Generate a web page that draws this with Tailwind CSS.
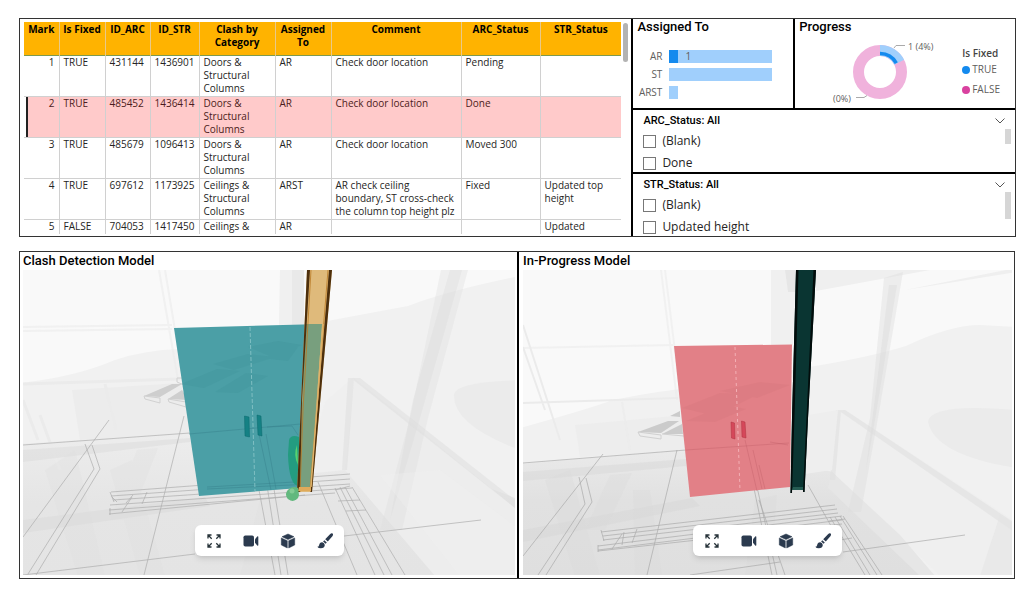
<!DOCTYPE html>
<html lang="en">
<head>
  <meta charset="UTF-8" />
  <meta name="viewport" content="width=device-width, initial-scale=1.0" />
  <title>Clash Detection Report</title>
  <script src="https://cdn.jsdelivr.net/npm/@tailwindcss/browser@4"></script>
</head>
<body class="bg-white text-[#252423] font-['Open_Sans',sans-serif] pt-[18px] pl-[19px] pr-[19px]">

  <!-- Shared icons -->
  <svg class="hidden">
    <symbol id="expand" viewBox="0 0 16 16">
      <path d="M2 5.500V2h3.500M10.500 2H14v3.500M14 10.500V14h-3.500M5.500 14H2v-3.500M2.300 2.300 5.700 5.700M13.700 2.300 10.300 5.700M13.700 13.700 10.300 10.300M2.300 13.700 5.700 10.300" fill="none" stroke="#263238" stroke-width="1.300" />
    </symbol>
    <symbol id="video" viewBox="0 0 16 16">
      <rect x="0.500" y="2.500" width="10.500" height="11" rx="1.800" fill="#2b3a4e" />
      <path d="M12 6.200 14.200 3.500q1.100-.8 1.100.500v8q0 1.300-1.100.5L12 9.800z" fill="#2b3a4e" />
    </symbol>
    <symbol id="cube" viewBox="0 0 16 16">
      <path d="M8 1 14 3.700 8 6.500 2 3.700zM1.300 4.900 7.300 7.700V15L1.300 12zM14.700 4.900 8.700 7.700V15l6-3z" fill="#2b3a4e" stroke="#2b3a4e" stroke-width=".5" stroke-linejoin="round" />
    </symbol>
    <symbol id="brush" viewBox="0 0 16 16">
      <path d="M15.600.6q1 1-.2 2.600L10.800 8.600 8.200 6.300 13 1.200Q14.600-.3 15.600.6zM7.300 7.200 9.800 9.600 8.600 10.800 6.100 8.400zM5.300 9.300q2.300.5 2.500 2.700-.3 3.300-4 3.300-2.500 0-3.500-1.500 1.500 0 1.800-1.600.5-3 3.200-2.900z" fill="#2b3a4e" />
    </symbol>
  </svg>

  <main>
    <section class="grid grid-cols-[612fr_384fr] border border-[#333]">
      <!-- Clash table -->
      <div class="relative h-[217px] pt-[3px] pl-[4px] pr-[10px]">
        <div class="h-[212px] overflow-hidden">
          <table class="w-full table-fixed border-collapse text-[10px] leading-[13px]">
            <colgroup>
              <col class="w-[35px]" /><col class="w-[46px]" /><col class="w-[45px]" /><col class="w-[49px]" /><col class="w-[76px]" /><col class="w-[56px]" /><col class="w-[130px]" /><col class="w-[79px]" /><col />
            </colgroup>
            <thead class="bg-[#ffb300] text-black">
              <tr class="h-[33px] align-top border-b border-[#7d9a50]">
                <th class="pt-px border-r border-[#e8c98a]">Mark</th>
                <th class="pt-px border-r border-[#e8c98a]">Is Fixed</th>
                <th class="pt-px border-r border-[#e8c98a]">ID_ARC</th>
                <th class="pt-px border-r border-[#e8c98a]">ID_STR</th>
                <th class="pt-px border-r border-[#e8c98a]">Clash by<br />Category</th>
                <th class="pt-px border-r border-[#e8c98a]">Assigned<br />To</th>
                <th class="pt-px border-r border-[#e8c98a]">Comment</th>
                <th class="pt-px border-r border-[#e8c98a]">ARC_Status</th>
                <th class="pt-px">STR_Status</th>
              </tr>
            </thead>
            <tbody class="[&_td]:pl-[4px] [&_td]:border-r [&_td]:border-[#d0d0d0] [&_td:last-child]:border-r-0 [&_td:first-child]:text-right [&_td:first-child]:pr-[4px] [&_tr]:h-[41px] [&_tr]:align-top [&_tr]:border-b [&_tr]:border-[#d0d0d0]">
              <tr><td>1</td><td>TRUE</td><td>431144</td><td>1436901</td><td>Doors &amp;<br />Structural<br />Columns</td><td>AR</td><td>Check door location</td><td>Pending</td><td></td></tr>
              <tr class="bg-[#ffcaca] text-[#4c1c20]"><td class="shadow-[inset_2px_0_0_#fff,inset_4px_0_0_#222]">2</td><td>TRUE</td><td>485452</td><td>1436414</td><td>Doors &amp;<br />Structural<br />Columns</td><td>AR</td><td>Check door location</td><td>Done</td><td></td></tr>
              <tr><td>3</td><td>TRUE</td><td>485679</td><td>1096413</td><td>Doors &amp;<br />Structural<br />Columns</td><td>AR</td><td>Check door location</td><td>Moved 300</td><td></td></tr>
              <tr><td>4</td><td>TRUE</td><td>697612</td><td>1173925</td><td>Ceilings &amp;<br />Structural<br />Columns</td><td>ARST</td><td>AR check ceiling<br />boundary, ST cross-check<br />the column top height plz</td><td>Fixed</td><td>Updated top<br />height</td></tr>
              <tr><td>5</td><td>FALSE</td><td>704053</td><td>1417450</td><td>Ceilings &amp;</td><td>AR</td><td></td><td></td><td>Updated</td></tr>
            </tbody>
          </table>
        </div>
        <div class="absolute top-[4px] right-[3px] w-[5px] h-[39px] rounded bg-[#b3b3b3]"></div>
      </div>

      <div class="flex flex-col border-l-2 border-black">
        <div class="grid grid-cols-[162fr_220fr] h-[91px] border-b-2 border-black">
          <div class="border-r-2 border-black">
            <h2 class="pl-[4px] font-['Roboto',sans-serif] font-medium text-[13px] leading-[16px] text-black">Assigned To</h2>
            <div class="mt-[15px] flex flex-col gap-[5px] text-[10px] leading-[13px] text-[#605e5c]">
              <div class="flex gap-[7px]"><span class="w-[29px] text-right">AR</span><span class="flex w-[103px] bg-[#a0cffc]"><span class="w-[9px] bg-[#148aee]"></span><span class="pl-[7px]">1</span></span></div>
              <div class="flex gap-[7px]"><span class="w-[29px] text-right">ST</span><span class="w-[103px] bg-[#a0cffc]"></span></div>
              <div class="flex gap-[7px]"><span class="w-[29px] text-right">ARST</span><span class="w-[9px] bg-[#a0cffc]"></span></div>
            </div>
          </div>
          <div>
            <h2 class="pl-[4px] font-['Roboto',sans-serif] font-medium text-[13px] leading-[16px] text-black">Progress</h2>
            <div class="flex">
              <svg class="w-[150px] h-[72px] shrink-0" viewBox="795 35 150 72" font-size="9" fill="#605e5c">
                <circle cx="880" cy="72" r="21.500" fill="none" stroke="#f0b2dc" stroke-width="11" />
                <path d="M880 50.500A21.500 21.500 0 0 1 899.200 62.200" fill="none" stroke="#a0cffc" stroke-width="11" />
                <path d="M880 53.500A18.500 18.500 0 0 1 896.300 63.200" fill="none" stroke="#148aee" stroke-width="3.500" />
                <path d="M894 48l2-2.500h9M856 97.500h8l3-2" fill="none" stroke="#aaa" />
                <text x="908" y="50">1 (4%)</text>
                <text x="833" y="102">(0%)</text>
              </svg>
              <div class="mt-[12px] ml-[17px] text-[10px] leading-[13px] text-[#605e5c] whitespace-nowrap">
                <p class="font-semibold text-[#444]">Is Fixed</p>
                <p class="mt-[3px] flex items-center gap-[2px]"><span class="size-[8px] rounded-full bg-[#148aee]"></span>TRUE</p>
                <p class="mt-[7px] flex items-center gap-[2px]"><span class="size-[8px] rounded-full bg-[#d9419f]"></span>FALSE</p>
              </div>
            </div>
          </div>
        </div>

        <fieldset class="relative h-[64px] border-b-2 border-black pl-[10px]">
          <div class="flex justify-between pr-[10px] pt-[2px] text-[11px] leading-[18px] text-black font-medium font-['Roboto',sans-serif]">
            <span>ARC_Status: All</span>
            <button aria-label="Collapse ARC_Status"><svg class="w-[10px] h-[6px]" viewBox="0 0 10 6"><path d="M.5.5 5 5 9.500.5" fill="none" stroke="#555" /></svg></button>
          </div>
          <label class="flex items-center gap-[6px] text-[12px] leading-[22px]"><input type="checkbox" class="appearance-none size-[13px] border border-[#777]" />(Blank)</label>
          <label class="flex items-center gap-[6px] text-[12px] leading-[22px]"><input type="checkbox" class="appearance-none size-[13px] border border-[#777]" />Done</label>
          <div class="absolute right-[4px] top-[19px] w-[6px] h-[15px] bg-[#d6d6d6]"></div>
        </fieldset>
        <fieldset class="relative h-[62px] overflow-hidden pl-[10px]">
          <div class="flex justify-between pr-[10px] pt-[2px] text-[11px] leading-[18px] text-black font-medium font-['Roboto',sans-serif]">
            <span>STR_Status: All</span>
            <button aria-label="Collapse STR_Status"><svg class="w-[10px] h-[6px]" viewBox="0 0 10 6"><path d="M.5.5 5 5 9.500.5" fill="none" stroke="#555" /></svg></button>
          </div>
          <label class="flex items-center gap-[6px] text-[12px] leading-[22px]"><input type="checkbox" class="appearance-none size-[13px] border border-[#777]" />(Blank)</label>
          <label class="flex items-center gap-[6px] text-[12px] leading-[22px]"><input type="checkbox" class="appearance-none size-[13px] border border-[#777]" />Updated height</label>
          <div class="absolute right-[4px] top-[18px] w-[6px] h-[27px] bg-[#d6d6d6]"></div>
        </fieldset>
      </div>
    </section>

    <section class="mt-[14px] mr-px grid grid-cols-[497fr_497fr] border border-[#333]">
      <div class="pl-[3px] pr-[2px] pb-[3px]">
        <h2 class="font-['Roboto',sans-serif] font-medium text-[13px] leading-[18px] text-black">Clash Detection Model</h2>
        <div class="relative">
          <svg class="block w-full h-[305px]" viewBox="23 270 492 305" preserveAspectRatio="xMidYMid slice">
            <defs>
              <linearGradient id="floor1" x1="0" y1="0" x2="0" y2="1"><stop offset="0" stop-color="#ededed" /><stop offset=".5" stop-color="#e5e5e5" /><stop offset="1" stop-color="#e4e4e4" /></linearGradient>
            </defs>
            <rect x="20" y="270" width="500" height="306" fill="#f9f9f9" />
            <path d="M20 383Q75 377 115 360 145 350 180 349L322 322Q370 313 408 306 450 290 520 276V576H20z" fill="#f1f1f1" />
            <path d="M20 444 200 432 345 432 520 500V576H20z" fill="url(#floor1)" />
            <path d="M72 390 180 383 200 434 80 440z" fill="#ececec" />
            <path d="M348 432 354 378 405 418 520 512V576H435L345 470z" fill="#ededed" />
            <path d="M325 402 354 377 345 470 305 474z" fill="#efefef" />
            <path d="M520 380Q456 382 454 394 452 425 520 450z" fill="#ebebeb" />
            <path d="M441 270H468L428 418 402 530H380L410 418z" fill="#dcdcdc" opacity=".35" />
            <path d="M450 270H462L420 418 390 520 413 400z" fill="#d6d6d6" opacity=".3" />
            <path d="M280 270H303V325H279z" fill="#f0f0f0" />
            <path d="M292 270H304V325H292z" fill="#e9e9e9" />
            <path d="M351 378 360 378 520 504V512zM348 378 354 378 347 470 342 470z" fill="#dddddd" opacity=".5" />
            <path d="M380 475 460 576H520V530L440 470z" fill="#f3f3f3" opacity=".3" />
            <g fill="none" stroke="#ebebeb" stroke-width="2">
              <path d="M23 327 172 325M23 331 172 329M159 270 178 380M165 270 184 384" opacity=".6" />
              <path d="M23 384 180 379M105 384 116 430M23 400 38 440M40 415 60 470" stroke-width="3" />
            </g>
            <path d="M23 450 190 438V442L23 462zM23 520 205 497 210 506 23 533z" fill="#d7d7d7" opacity=".4" />
            <path d="M45 470 78 576H105L75 450zM110 470 140 576H165L132 460zM137 450 110 520H130L158 448zM280 500 275 576H240L260 500z" fill="#ddd" opacity=".3" />
            <path d="M144 396 172 384H182L160 397zM168 399 182 390 188 400z" fill="#cecece" />
            <path d="M144 396 160 398V403L145 399zM168 399 186 402V407L169 402zM177 378H184V385L177 382z" fill="none" stroke="#d1d1d1" />
            <g fill="none" stroke="#adadad" stroke-width=".7">
              <path d="M23 445 190 433M23 537 109 420M28 574 94 469 85 444M36 575 100 469 92 445" />
              <path d="M184 416 144 575M23 575 195 554M344 536 481 520" />
              <path d="M111 492 350 474M111 496 350 479M113 500 350 484M110 505 352 488M109 510 335 493M109 514 305 495M110 492 114 502M110 508V515M112 497 117 502M122 512 132 497M126 503 133 495M142 504 147 492" />
              <path d="M259 434 281 575M265 434 288 575M259 490 275 575M318 482 357 575M335 488 375 575M340 487 384 575M345 487 392 575M352 487 405 575M335 490 350 486M338 501 360 500M346 511 366 510" />
            </g>
            <path d="M174 328 322 324 312 487 199 496z" fill="#4b9fa6" />
            <path d="M181 384 217 369 240 371 204 388zM213 364 248 354 275 357 234 370zM248 347 278 341 302 345 272 357zM215 392 246 373 268 376 238 393zM262 358 298 347 288 361z" fill="#378b92" opacity=".18" />
            <path d="M189 434 312 423M207 487 312 481M207 489 312 484M259 434 271 490M266 434 276 489M267 427 292 426 298 435" fill="none" stroke="#347e88" stroke-width=".7" opacity=".6" />
            <path d="M250 327 255 491" stroke="#7fbfc3" stroke-dasharray="4 2" />
            <path d="M244.500 416 249 417 249.500 437 245 436zM257 415 261 416 262 436 258 435z" fill="#158184" stroke="#0b686c" stroke-width=".5" />
            <path d="M289 440Q291 434 299 437V486Q289 486 288 455z" fill="#239c80" />
            <path d="M297 445Q293 455 298 465z" fill="#57d370" />
            <path d="M307 270H332L312 492H297z" fill="#dfba7b" />
            <path d="M305 324H322L311 487H299z" fill="#789f7e" />
            <path d="M307 270H310L302 400 300 492H297zM329 270H332L312 492H310.500z" fill="#4d2f0c" />
            <path d="M311 270 303 410 300 492M328 270 318 395 310 490" fill="none" stroke="#b97a26" stroke-width=".8" />
            <path d="M323 324 311 487" stroke="#dfb269" stroke-width="1.500" />
            <path d="M299 487H311V491H298z" fill="#dfaa5a" />
            <path d="M287 491A6.500 6.500 0 1 0 299 495L298 488Q292 485 287 491z" fill="#62b87e" />
            <circle cx="292" cy="491" r="2.500" fill="#82cb94" />
          </svg>
          <div class="absolute inset-x-0 bottom-[19px] flex justify-center">
            <div class="flex h-[31px] items-center gap-[21px] rounded-md bg-white px-[11px] shadow-md">
              <button aria-label="Fit view"><svg class="size-[16px]"><use href="#expand" /></svg></button>
              <button aria-label="Camera"><svg class="size-[16px]"><use href="#video" /></svg></button>
              <button aria-label="Section box"><svg class="size-[16px]"><use href="#cube" /></svg></button>
              <button aria-label="Paint"><svg class="size-[16px]"><use href="#brush" /></svg></button>
            </div>
          </div>
        </div>
      </div>

      <div class="border-l-2 border-black pl-[4px] pr-[2px] pb-[3px]">
        <h2 class="font-['Roboto',sans-serif] font-medium text-[13px] leading-[18px] text-black">In-Progress Model</h2>
        <div class="relative">
          <svg class="block w-full h-[305px]" viewBox="523 270 489 305" preserveAspectRatio="xMidYMid slice">
            <defs>
              <linearGradient id="floor2" x1="0" y1="0" x2="0" y2="1"><stop offset="0" stop-color="#eaeaea" /><stop offset=".4" stop-color="#e1e1e1" /><stop offset="1" stop-color="#dfdfdf" /></linearGradient>
            </defs>
            <rect x="520" y="270" width="496" height="306" fill="#f9f9f9" />
            <path d="M520 428Q585 410 610 401 640 394 680 389L815 366Q870 357 906 346 950 325 980 325L1016 327V576H520z" fill="#f1f1f1" />
            <path d="M816 270H930L816 291zM905 290 1016 268V272z" fill="#efefef" />
            <path d="M520 464 685 450 835 472 925 576H520z" fill="url(#floor2)" />
            <path d="M575 425 685 415 690 450 580 457z" fill="#ededed" />
            <path d="M832 472 836 412 845 410 1016 522V576H940z" fill="#efefef" />
            <path d="M832 472 900 535 935 576H920L828 488z" fill="#e6e6e6" />
            <path d="M1016 410Q930 403 928 422 935 455 1016 468z" fill="#ebebeb" />
            <path d="M884 278 903 272 878 418 861 512H848L870 418z" fill="#dcdcdc" opacity=".4" />
            <path d="M889 285 897 285 875 420 866 470z" fill="#d6d6d6" opacity=".35" />
            <path d="M838 410 845 410 1016 524V533zM836 410 841 410 835 480 830 480z" fill="#ddd" opacity=".5" />
            <path d="M771 270H796L793 345H771z" fill="#f0f0f0" />
            <path d="M785 270H797V292H788z" fill="#e6e6e6" />
            <path d="M808 415 838 410 832 470 805 474z" fill="#eee" />
            <path d="M1000 515 980 576H1016V525z" fill="#e5e5e5" opacity=".6" />
            <g fill="none" stroke="#ebebeb" stroke-width="2">
              <path d="M523 348 673 345M661 270 677 400M665 270 681 400" opacity=".55" />
              <path d="M523 403 678 398M523 325 560 440M523 347 545 410" />
              <path d="M622 402 630 450" opacity=".7" />
            </g>
            <path d="M523 472 686 459V466L523 481zM523 530 692 498 700 506 523 542z" fill="#d4d4d4" opacity=".4" />
            <path d="M545 480 575 576H600L570 470zM610 475 585 530H605L632 473zM633 490 635 576H662L650 490zM777 495 770 576H745L755 500z" fill="#d9d9d9" opacity=".35" />
            <path d="M638 432 668 421H679L661 433zM662 434 682 424 683 434zM670 416 680 411V417z" fill="#cbcbcb" />
            <path d="M638 432 661 435V439L640 436zM662 434 684 436" fill="none" stroke="#d0d0d0" />
            <g fill="none" stroke="#ababab" stroke-width=".7">
              <path d="M523 463 686 450M523 556 603 454M538 575 585 504 579 477M546 575 592 502 586 478" />
              <path d="M677 450 647 575M690 575 780 562M843 552 965 535M808 485 835 533" />
              <path d="M601 532 835 505M603 536 837 509M603 540 838 513M598 546 842 516M598 550 842 520M598 551 842 524M601 530 604 541M598 545V552M612 549 622 534M622 545 624 532M632 543 637 529" />
              <path d="M746 450 772 575M752 465 777 575M759 500 785 575M830 517 865 575M835 517 870 575M840 516 877 575M843 516 882 575M829 521 845 519M840 540 852 538" />
            </g>
            <path d="M674 346 792 344.500 790 487 690 497z" fill="#e28087" />
            <path d="M682 408 720 393 759 394 715 416zM720 391 760 382 790 385 757 398zM686 421 725 405 746 409 715 422z" fill="#c86972" opacity=".16" />
            <path d="M686 450 789 443M745 440 757 491M753 450 762 489M759 465 765 489M770 442 788 445" fill="none" stroke="#c2606b" stroke-width=".7" opacity=".6" />
            <path d="M735 347 740 491" stroke="#f4b0b5" stroke-dasharray="3 3" />
            <path d="M731 422 734.500 423 735 439 731.500 438zM741.500 421 745 422 746 438 742 437z" fill="#d5485a" stroke="#ae3341" stroke-width=".5" />
            <path d="M796 270H816L808 418 804.500 492H803V490H792V493H790.500L792 418z" fill="#0a3532" />
            <path d="M796 270H798.500L795 400 792 493H790.500L792 418zM813.500 270H816L808 418 804.500 492H803z" fill="#020c0b" />
            <path d="M793 487H803V490H792z" fill="#245b52" />
          </svg>
          <div class="absolute inset-x-0 bottom-[19px] flex justify-center">
            <div class="flex h-[31px] items-center gap-[21px] rounded-md bg-white px-[11px] shadow-md">
              <button aria-label="Fit view"><svg class="size-[16px]"><use href="#expand" /></svg></button>
              <button aria-label="Camera"><svg class="size-[16px]"><use href="#video" /></svg></button>
              <button aria-label="Section box"><svg class="size-[16px]"><use href="#cube" /></svg></button>
              <button aria-label="Paint"><svg class="size-[16px]"><use href="#brush" /></svg></button>
            </div>
          </div>
        </div>
      </div>
    </section>
  </main>
</body>
</html>
